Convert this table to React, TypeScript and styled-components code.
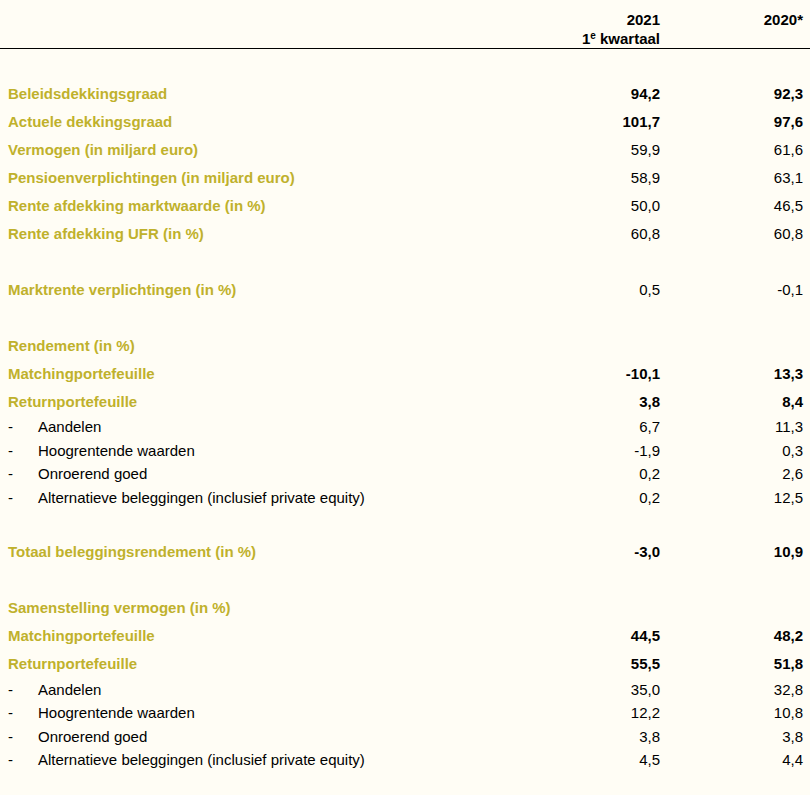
import React from 'react'
import styled, { createGlobalStyle } from 'styled-components'

type Row =
  | { kind: 'head'; label: string; a?: string; b?: string; strong?: boolean }
  | { kind: 'item'; label: string; a: string; b: string }
  | { kind: 'gap' }

const rows: Row[] = [
  { kind: 'head', label: 'Beleidsdekkingsgraad', a: '94,2', b: '92,3', strong: true },
  { kind: 'head', label: 'Actuele dekkingsgraad', a: '101,7', b: '97,6', strong: true },
  { kind: 'head', label: 'Vermogen (in miljard euro)', a: '59,9', b: '61,6' },
  { kind: 'head', label: 'Pensioenverplichtingen (in miljard euro)', a: '58,9', b: '63,1' },
  { kind: 'head', label: 'Rente afdekking marktwaarde (in %)', a: '50,0', b: '46,5' },
  { kind: 'head', label: 'Rente afdekking UFR (in %)', a: '60,8', b: '60,8' },
  { kind: 'gap' },
  { kind: 'head', label: 'Marktrente verplichtingen (in %)', a: '0,5', b: '-0,1' },
  { kind: 'gap' },
  { kind: 'head', label: 'Rendement (in %)' },
  { kind: 'head', label: 'Matchingportefeuille', a: '-10,1', b: '13,3', strong: true },
  { kind: 'head', label: 'Returnportefeuille', a: '3,8', b: '8,4', strong: true },
  { kind: 'item', label: 'Aandelen', a: '6,7', b: '11,3' },
  { kind: 'item', label: 'Hoogrentende waarden', a: '-1,9', b: '0,3' },
  { kind: 'item', label: 'Onroerend goed', a: '0,2', b: '2,6' },
  { kind: 'item', label: 'Alternatieve beleggingen (inclusief private equity)', a: '0,2', b: '12,5' },
  { kind: 'gap' },
  { kind: 'head', label: 'Totaal beleggingsrendement (in %)', a: '-3,0', b: '10,9', strong: true },
  { kind: 'gap' },
  { kind: 'head', label: 'Samenstelling vermogen (in %)' },
  { kind: 'head', label: 'Matchingportefeuille', a: '44,5', b: '48,2', strong: true },
  { kind: 'head', label: 'Returnportefeuille', a: '55,5', b: '51,8', strong: true },
  { kind: 'item', label: 'Aandelen', a: '35,0', b: '32,8' },
  { kind: 'item', label: 'Hoogrentende waarden', a: '12,2', b: '10,8' },
  { kind: 'item', label: 'Onroerend goed', a: '3,8', b: '3,8' },
  { kind: 'item', label: 'Alternatieve beleggingen (inclusief private equity)', a: '4,5', b: '4,4' },
]

const App: React.FC = () => {
  return (
    <>
      <GlobalStyle />
      <Page>
        <Header>
          <HeaderCell />
          <HeaderCell>
            2021
            <br />
            1<sup>e</sup> kwartaal
          </HeaderCell>
          <HeaderCell>2020*</HeaderCell>
        </Header>
        <Body>
          {rows.map((row, i) => {
            if (row.kind === 'gap') return <Gap key={i} />
            if (row.kind === 'item')
              return (
                <ItemRow key={i}>
                  <Dash>-</Dash>
                  <ItemLabel>{row.label}</ItemLabel>
                  <Num>{row.a}</Num>
                  <Num>{row.b}</Num>
                </ItemRow>
              )
            return (
              <MainRow key={i}>
                <Label>{row.label}</Label>
                <Num strong={row.strong}>{row.a}</Num>
                <Num strong={row.strong}>{row.b}</Num>
              </MainRow>
            )
          })}
        </Body>
      </Page>
    </>
  )
}

const GlobalStyle = createGlobalStyle`
  html, body {
    margin: 0;
    background: #fffdf5;
  }
  body {
    font-family: 'Liberation Sans', Arial, sans-serif;
    font-size: 15px;
    color: #000;
  }
`

const Page = styled.div`
  width: 810px;
  min-height: 795px;
  background: #fffdf5;
`

const cols = `
  display: grid;
  grid-template-columns: 1fr 130px 143px;
  padding: 0 7px 0 8px;
`

const Header = styled.div`
  ${cols}
  padding-top: 10px;
  border-bottom: 1px solid #000;
  line-height: 19px;
`

const HeaderCell = styled.div`
  font-weight: bold;
  text-align: right;

  sup {
    font-size: 10px;
    line-height: 0;
    vertical-align: 5px;
  }
`

const Body = styled.div`
  padding-top: 30px;
`

const MainRow = styled.div`
  ${cols}
  height: 28px;
  align-items: center;
`

const ItemRow = styled.div`
  display: grid;
  grid-template-columns: 30px 1fr 130px 143px;
  padding: 0 7px 0 8px;
  height: 23.6px;
  align-items: center;
`

const Gap = styled.div`
  height: 28px;
`

const Label = styled.div`
  font-weight: bold;
  color: #bfb12c;
`

const Dash = styled.span``

const ItemLabel = styled.span``

const Num = styled.div<{ strong?: boolean }>`
  text-align: right;
  font-weight: ${(p) => (p.strong ? 'bold' : 'normal')};
`

export default App
